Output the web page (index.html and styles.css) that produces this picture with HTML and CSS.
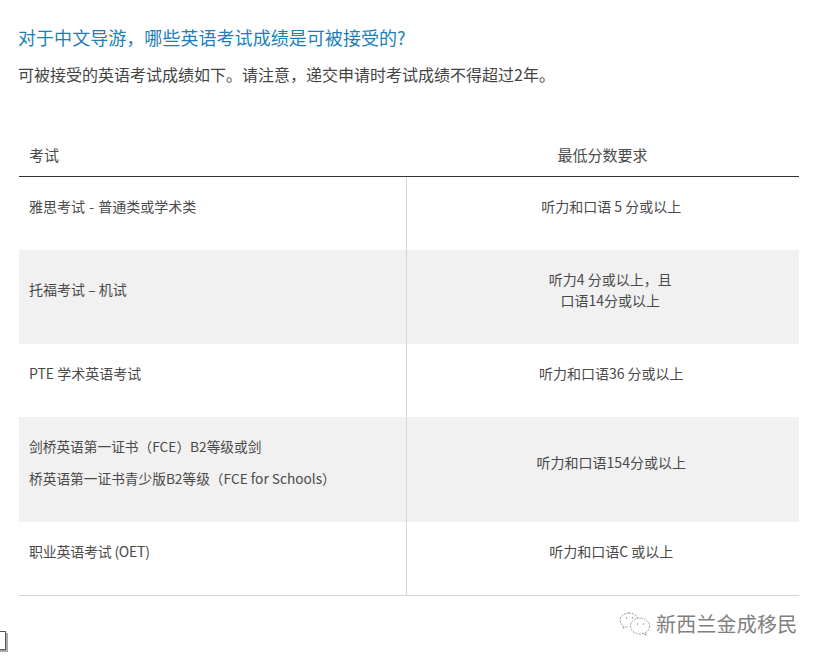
FILE: index.html
```html
<!DOCTYPE html>
<html lang="zh">
<head>
<meta charset="utf-8">
<title>英语考试成绩</title>
<link rel="stylesheet" href="styles.css">
</head>
<body>
<main class="page">
  <h1 class="title">对于中文导游，哪些英语考试成绩是可被接受的?</h1>
  <p class="lead">可被接受的英语考试成绩如下。请注意，递交申请时考试成绩不得超过2年。</p>
  <table class="scores">
    <thead>
      <tr><th class="exam">考试</th><th class="req">最低分数要求</th></tr>
    </thead>
    <tbody>
      <tr class="r1"><td class="exam">雅思考试 - 普通类或学术类</td><td class="req">听力和口语 5 分或以上</td></tr>
      <tr class="r2 alt"><td class="exam">托福考试 – 机试</td><td class="req">听力4 分或以上，且<br>口语14分或以上</td></tr>
      <tr class="r3"><td class="exam">PTE 学术英语考试</td><td class="req">听力和口语36 分或以上</td></tr>
      <tr class="r4 alt"><td class="exam"><p class="para">剑桥英语第一证书（FCE）B2等级或剑</p><p class="para">桥英语第一证书青少版B2等级（FCE for Schools）</p></td><td class="req">听力和口语154分或以上</td></tr>
      <tr class="r5"><td class="exam">职业英语考试 (OET)</td><td class="req">听力和口语C 或以上</td></tr>
    </tbody>
  </table>
</main>
<div class="crumb"></div>
<div class="mark">
  <svg class="mark-icon" width="34" height="26" viewBox="0 0 34 26" fill="none" stroke="#9a9a9a" stroke-width="1" stroke-dasharray="2 1.2">
    <path d="M11 2C6 2 2 5.2 2 9.2c0 2.4 1.3 4.3 3.4 5.6l-.8 2.6 3-1.6c1 .3 2 .4 3 .4"/>
    <path d="M11 2c4.300 0 7.800 2.300 8.700 5.500"/>
    <ellipse cx="22" cy="15" rx="9.500" ry="8"/>
    <path d="M26 22.500l2 2.200-.2-3.600"/>
    <path d="M8 7h1M14 7h1M19 13h1M25 13h1" stroke-dasharray="none" stroke="#666"/>
  </svg>
  <span class="mark-text">新西兰金成移民</span>
</div>
</body>
</html>
```
FILE: styles.css
```css
html, body {
  margin: 0;
  padding: 0;
  background: #fff;
}
body {
  width: 823px;
  height: 661px;
  position: relative;
  overflow: hidden;
  font-family: "Noto Sans CJK SC", "Noto Sans", sans-serif;
  color: #4a4a4a;
}
.page {
  padding: 24px 24px 0 19px;
}
.title {
  margin: 0 0 0 -1px;
  font-size: 18px;
  font-weight: 400;
  line-height: 26px;
  color: #1b7fb9;
  letter-spacing: 0.050px;
}
.lead {
  margin: 13px 0 0 -1px;
  font-size: 16px;
  line-height: 23px;
  color: #444;
}
.scores {
  width: 780px;
  margin-top: 48px;
  border-collapse: collapse;
  table-layout: fixed;
  font-size: 14px;
  line-height: 21px;
}
.scores th {
  height: 40px;
  padding: 0 10px 2px;
  font-size: 15px;
  font-weight: 400;
  border-bottom: 1px solid #333;
  vertical-align: middle;
}
.scores td {
  padding: 19px 10px 0;
  vertical-align: top;
  border-bottom: 0;
}
.scores td.req {
  padding-left: 27px;
}
th.exam, td.exam {
  width: 367px;
  text-align: left;
}
td.exam {
  border-right: 1px solid #d6d6d6;
}
.req {
  text-align: center;
}
.alt {
  background: #f1f1f1;
}
.r1 { height: 73px; }
.r2 { height: 94px; }
.r3 { height: 73px; }
.r4 { height: 105px; }
.r5 { height: 74px; border-bottom: 1px solid #d6d6d6; }
.r1 td.exam { word-spacing: 1px; }
.r5 td.exam { letter-spacing: -0.250px; }
.scores .r2 td.exam { padding-top: 29px; }
.scores .r2 td.req { padding-left: 25px; }
.scores .r4 td.req { padding-top: 35px; }
.para {
  margin: 0 0 11px;
  font-size: 13.700px;
}
.crumb {
  position: absolute;
  left: -2px;
  top: 631px;
  width: 6px;
  height: 17px;
  border: 1px solid #555;
  background: #fff;
  box-shadow: 2px 2px 0 #aaa;
}
.mark {
  position: absolute;
  left: 618px;
  top: 610px;
  display: flex;
  align-items: center;
  gap: 4px;
}
.mark-text {
  font-size: 20px;
  line-height: 28px;
  color: #808080;
  letter-spacing: 0.200px;
}
```
